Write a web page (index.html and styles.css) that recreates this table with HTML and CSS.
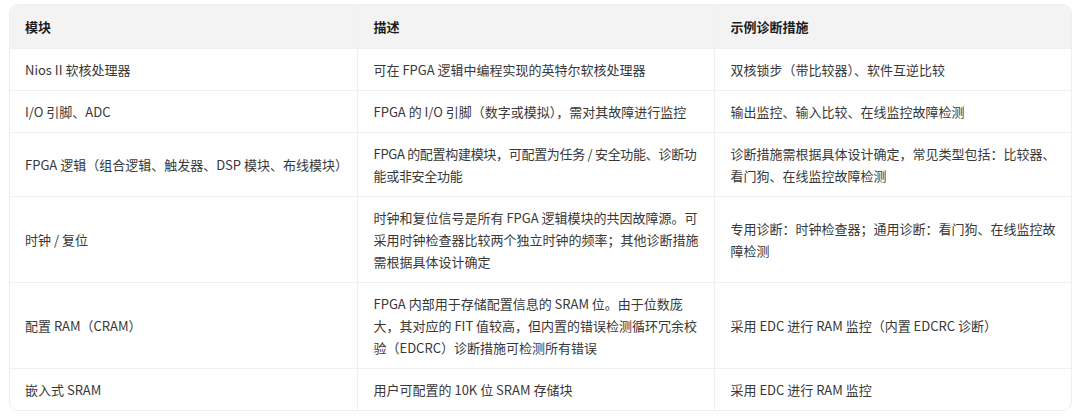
FILE: index.html
```html
<!DOCTYPE html>
<html lang="zh-CN">
<head>
<meta charset="utf-8">
<link rel="stylesheet" href="styles.css">
</head>
<body>
<div class="table-wrap">
<table class="diag">
<colgroup><col class="c1"><col class="c2"><col class="c3"></colgroup>
<thead>
<tr><th>模块</th><th>描述</th><th>示例诊断措施</th></tr>
</thead>
<tbody>
<tr><td>Nios II 软核处理器</td><td>可在 FPGA 逻辑中编程实现的英特尔软核处理器</td><td>双核锁步（带比较器）、软件互逆比较</td></tr>
<tr><td>I/O 引脚、ADC</td><td>FPGA 的 I/O 引脚（数字或模拟），需对其故障进行监控</td><td>输出监控、输入比较、在线监控故障检测</td></tr>
<tr><td>FPGA 逻辑（组合逻辑、触发器、DSP 模块、布线模块）</td><td class="tight">FPGA 的配置构建模块，可配置为任务 / 安全功能、诊断功能或非安全功能</td><td>诊断措施需根据具体设计确定，常见类型包括：比较器、看门狗、在线监控故障检测</td></tr>
<tr><td>时钟 / 复位</td><td>时钟和复位信号是所有 FPGA 逻辑模块的共因故障源。可采用时钟检查器比较两个独立时钟的频率；其他诊断措施需根据具体设计确定</td><td>专用诊断：时钟检查器；通用诊断：看门狗、在线监控故障检测</td></tr>
<tr><td>配置 RAM（CRAM）</td><td>FPGA 内部用于存储配置信息的 SRAM 位。由于位数庞大，其对应的 FIT 值较高，但内置的错误检测循环冗余校验（EDCRC）诊断措施可检测所有错误</td><td>采用 EDC 进行 RAM 监控（内置 EDCRC 诊断）</td></tr>
<tr><td>嵌入式 SRAM</td><td>用户可配置的 10K 位 SRAM 存储块</td><td>采用 EDC 进行 RAM 监控</td></tr>
</tbody>
</table>
</div>
</body>
</html>
```

FILE: styles.css
```css
html, body {
  margin: 0;
  padding: 0;
  background: #ffffff;
}
body {
  font-family: "Noto Sans CJK SC", "Noto Sans", sans-serif;
  font-size: 13px;
  color: #383838;
}
.table-wrap {
  margin: 4px 8px 0 9px;
  width: 1063px;
  border: 1px solid #efefef;
  border-radius: 9px;
  overflow: hidden;
  box-sizing: border-box;
}
.diag {
  width: 100%;
  border-collapse: collapse;
  table-layout: fixed;
}
.c1 { width: 347px; }
.c2 { width: 357px; }
.c3 { width: auto; }
.diag th,
.diag td {
  text-align: left;
  vertical-align: middle;
  padding: 9.5px 14px 9.5px 15px;
  line-height: 22px;
  border-left: 1px solid #efefef;
  border-top: 1px solid #f1f1f1;
}
.diag th:first-child,
.diag td:first-child { border-left: none; }
.diag th {
  background: #f3f3f3;
  font-weight: 700;
  color: #1c1c1c;
  border-top: none;
  padding-top: 10.5px;
  padding-bottom: 10.5px;
}
.diag td:nth-child(2),
.diag td:nth-child(3),
.diag th:nth-child(2),
.diag th:nth-child(3) {
  padding-left: 16px;
}
.diag td.tight {
  letter-spacing: -0.3px;
}
```
